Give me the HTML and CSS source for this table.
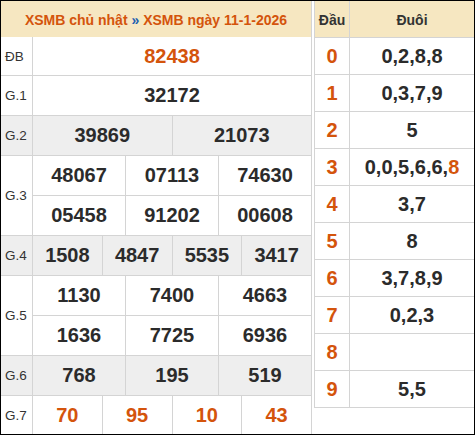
FILE: index.html
```html
<!DOCTYPE html>
<html lang="vi">
<head>
<meta charset="utf-8">
<title>XSMB 11-1-2026</title>
<link rel="stylesheet" href="styles.css">
</head>
<body>
<div class="board">
  <div class="kq">
    <div class="kq-head"><span class="title">XSMB chủ nhật <span class="sep">»</span> XSMB ngày 11-1-2026</span></div>
    <div class="kq-row r-db">
      <div class="lbl">ĐB</div>
      <div class="vals"><div class="sub"><div class="v red">82438</div></div></div>
    </div>
    <div class="kq-row">
      <div class="lbl">G.1</div>
      <div class="vals"><div class="sub"><div class="v">32172</div></div></div>
    </div>
    <div class="kq-row alt">
      <div class="lbl">G.2</div>
      <div class="vals"><div class="sub"><div class="v">39869</div><div class="v">21073</div></div></div>
    </div>
    <div class="kq-row">
      <div class="lbl">G.3</div>
      <div class="vals">
        <div class="sub"><div class="v">48067</div><div class="v">07113</div><div class="v">74630</div></div>
        <div class="sub"><div class="v">05458</div><div class="v">91202</div><div class="v">00608</div></div>
      </div>
    </div>
    <div class="kq-row alt">
      <div class="lbl">G.4</div>
      <div class="vals"><div class="sub"><div class="v">1508</div><div class="v">4847</div><div class="v">5535</div><div class="v">3417</div></div></div>
    </div>
    <div class="kq-row">
      <div class="lbl">G.5</div>
      <div class="vals">
        <div class="sub"><div class="v">1130</div><div class="v">7400</div><div class="v">4663</div></div>
        <div class="sub"><div class="v">1636</div><div class="v">7725</div><div class="v">6936</div></div>
      </div>
    </div>
    <div class="kq-row alt">
      <div class="lbl">G.6</div>
      <div class="vals"><div class="sub"><div class="v">768</div><div class="v">195</div><div class="v">519</div></div></div>
    </div>
    <div class="kq-row last">
      <div class="lbl">G.7</div>
      <div class="vals"><div class="sub"><div class="v red">70</div><div class="v red">95</div><div class="v red">10</div><div class="v red">43</div></div></div>
    </div>
  </div>

  <div class="lt">
    <div class="lt-row lt-head"><div class="dau">Đầu</div><div class="duoi">Đuôi</div></div>
    <div class="lt-row"><div class="dau">0</div><div class="duoi">0,2,8,8</div></div>
    <div class="lt-row"><div class="dau">1</div><div class="duoi">0,3,7,9</div></div>
    <div class="lt-row"><div class="dau">2</div><div class="duoi">5</div></div>
    <div class="lt-row"><div class="dau">3</div><div class="duoi"><span>0,0,5,6,6,<span class="red">8</span></span></div></div>
    <div class="lt-row"><div class="dau">4</div><div class="duoi">3,7</div></div>
    <div class="lt-row"><div class="dau">5</div><div class="duoi">8</div></div>
    <div class="lt-row"><div class="dau">6</div><div class="duoi">3,7,8,9</div></div>
    <div class="lt-row"><div class="dau">7</div><div class="duoi">0,2,3</div></div>
    <div class="lt-row"><div class="dau">8</div><div class="duoi"></div></div>
    <div class="lt-row"><div class="dau">9</div><div class="duoi">5,5</div></div>
  </div>
</div>
</body>
</html>
```

FILE: styles.css
```css
html, body {
  margin: 0;
  padding: 0;
  background: #fff;
}

.board {
  width: 475px;
  height: 435px;
  box-sizing: border-box;
  border: 1px solid #000;
  display: flex;
  align-items: flex-start;
  gap: 2px;
  overflow: hidden;
  font-family: "Liberation Sans", Arial, sans-serif;
  color: #2b2b2b;
  background: #fff;
}

.red {
  color: #d4540c;
}

/* left: results table */
.kq {
  width: 311px;
  flex: none;
}

.kq-head {
  height: 36px;
  box-sizing: border-box;
  border-right: 1px solid #d4d4d4;
  background: #f6e7c1;
  display: flex;
  align-items: center;
  justify-content: center;
  padding-top: 2px;
  font-size: 14px;
  font-weight: bold;
  color: #d4540c;
}

.kq-head .sep {
  color: #1f5fb0;
}

.kq-row {
  display: flex;
  border-bottom: 1px solid #d4d4d4;
}

.kq-row.alt {
  background: #eeeeee;
}

.kq-row.last {
  border-bottom: none;
}

.lbl {
  width: 32px;
  flex: none;
  box-sizing: border-box;
  border-right: 1px solid #d4d4d4;
  display: flex;
  align-items: center;
  padding-left: 4px;
  font-size: 13.5px;
  color: #333;
}

.vals {
  flex: 1;
  display: flex;
  flex-direction: column;
}

.sub {
  display: flex;
  height: 39px;
}

.sub + .sub {
  border-top: 1px solid #d4d4d4;
}

.r-db .sub {
  height: 38px;
}

.last .sub {
  height: 38px;
}

.v {
  flex: 1;
  box-sizing: border-box;
  border-right: 1px solid #d4d4d4;
  display: flex;
  align-items: center;
  justify-content: center;
  font-size: 20px;
  font-weight: bold;
}

/* right: loto table */
.lt {
  width: 160px;
  flex: none;
  box-sizing: border-box;
  border-left: 1px solid #d4d4d4;
}

.lt-row {
  display: flex;
  height: 37px;
  box-sizing: border-box;
  border-bottom: 1px solid #d4d4d4;
}

.dau {
  width: 35px;
  flex: none;
  box-sizing: border-box;
  border-right: 1px solid #d4d4d4;
  display: flex;
  align-items: center;
  justify-content: center;
  font-size: 20px;
  font-weight: bold;
  color: #d4540c;
}

.duoi {
  flex: 1;
  display: flex;
  align-items: center;
  justify-content: center;
  font-size: 20px;
  font-weight: bold;
}

.lt-head {
  background: #f6e7c1;
}

.lt-head .dau,
.lt-head .duoi {
  font-size: 14px;
  color: #333;
  padding-top: 2px;
}
```
